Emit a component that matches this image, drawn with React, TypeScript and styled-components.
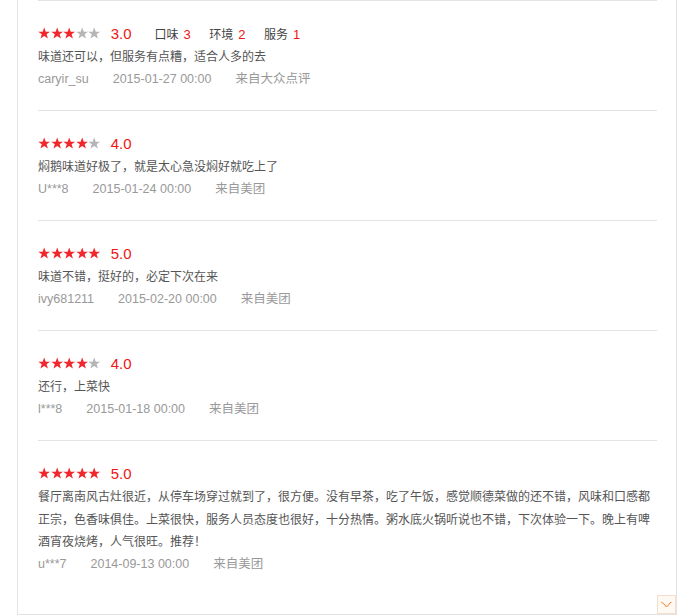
import React from 'react';
import styled, { createGlobalStyle } from 'styled-components';

type Review = {
  score: number;
  detail?: { label: string; value: number }[];
  text: string;
  user: string;
  date: string;
  source: string;
};

const reviews: Review[] = [
  {
    score: 3,
    detail: [
      { label: '口味', value: 3 },
      { label: '环境', value: 2 },
      { label: '服务', value: 1 },
    ],
    text: '味道还可以，但服务有点糟，适合人多的去',
    user: 'caryir_su',
    date: '2015-01-27 00:00',
    source: '来自大众点评',
  },
  {
    score: 4,
    text: '焖鹅味道好极了，就是太心急没焖好就吃上了',
    user: 'U***8',
    date: '2015-01-24 00:00',
    source: '来自美团',
  },
  {
    score: 5,
    text: '味道不错，挺好的，必定下次在来',
    user: 'ivy681211',
    date: '2015-02-20 00:00',
    source: '来自美团',
  },
  {
    score: 4,
    text: '还行，上菜快',
    user: 'l***8',
    date: '2015-01-18 00:00',
    source: '来自美团',
  },
  {
    score: 5,
    text: '餐厅离南风古灶很近，从停车场穿过就到了，很方便。没有早茶，吃了午饭，感觉顺德菜做的还不错，风味和口感都正宗，色香味俱佳。上菜很快，服务人员态度也很好，十分热情。粥水底火锅听说也不错，下次体验一下。晚上有啤酒宵夜烧烤，人气很旺。推荐！',
    user: 'u***7',
    date: '2014-09-13 00:00',
    source: '来自美团',
  },
];

const Star: React.FC<{ on: boolean }> = ({ on }) => (
  <svg width='12.4' height='12.4' viewBox='0 0 24 24'>
    <polygon
      points='12,1 15,9 23.5,9 16.7,14.2 19.2,22.5 12,17.5 4.8,22.5 7.3,14.2 0.5,9 9,9'
      fill={on ? '#f0282d' : '#b5b5b5'}
    />
  </svg>
);

const App: React.FC = () => {
  return (
    <>
      <GlobalStyle />
      <Panel>
        <List>
          {reviews.map((r, i) => (
            <Item key={i}>
              <ScoreRow>
                <Stars>
                  {[1, 2, 3, 4, 5].map((n) => (
                    <Star key={n} on={n <= r.score} />
                  ))}
                </Stars>
                <Score>{r.score.toFixed(1)}</Score>
                {r.detail && (
                  <Details>
                    {r.detail.map((d) => (
                      <Detail key={d.label}>
                        {d.label}
                        <DetailValue>{d.value}</DetailValue>
                      </Detail>
                    ))}
                  </Details>
                )}
              </ScoreRow>
              <Comment>{r.text}</Comment>
              <Meta>
                <span>{r.user}</span>
                <span>{r.date}</span>
                <span>{r.source}</span>
              </Meta>
            </Item>
          ))}
        </List>
        <MoreButton>
          <svg width='11' height='7' viewBox='0 0 11 7'>
            <polyline
              points='0.5,0.8 5.5,5.8 10.5,0.8'
              fill='none'
              stroke='#f06a10'
              strokeWidth='1.1'
              strokeDasharray='1.2 0.6'
            />
          </svg>
        </MoreButton>
      </Panel>
    </>
  );
};

const GlobalStyle = createGlobalStyle`
  body {
    margin: 0;
    background: #ffffff;
    font-family: 'Liberation Sans', 'Noto Sans CJK SC', sans-serif;
  }
`;

const Panel = styled.div`
  position: relative;
  width: 658px;
  margin-left: 17px;
  border-left: 1px solid #e3e3e3;
  border-right: 1px solid #e3e3e3;
  border-bottom: 1px solid #e3e3e3;
  padding-bottom: 19px;
`;

const List = styled.div`
  display: flex;
  flex-direction: column;
  margin: 0 19px 0 20px;
`;

const Item = styled.div`
  display: flex;
  flex-direction: column;
  border-top: 1px solid #e3e3e3;
  padding: 24px 0 20px;
`;

const ScoreRow = styled.div`
  display: flex;
  align-items: center;
  height: 16px;
`;

const Stars = styled.div`
  display: flex;
  gap: 0.2px;
`;

const Score = styled.span`
  margin-left: 10px;
  font-size: 15px;
  color: #f01414;
`;

const Details = styled.div`
  display: flex;
  gap: 18.5px;
  margin-left: 23px;
`;

const Detail = styled.span`
  font-size: 12px;
  color: #444;
`;

const DetailValue = styled.span`
  margin-left: 5px;
  font-size: 13px;
  color: #f01414;
`;

const Comment = styled.p`
  margin: 5px 0 0;
  font-size: 12px;
  line-height: 22.5px;
  color: #555;
`;

const Meta = styled.div`
  display: flex;
  gap: 24px;
  font-size: 12.5px;
  line-height: 21.5px;
  color: #999;
`;

const MoreButton = styled.div`
  position: absolute;
  right: 0;
  bottom: 0;
  width: 17px;
  height: 17px;
  display: flex;
  align-items: center;
  justify-content: center;
  background: #fff9f3;
  border: 1px solid #f5dfcc;
`;

export default App;
